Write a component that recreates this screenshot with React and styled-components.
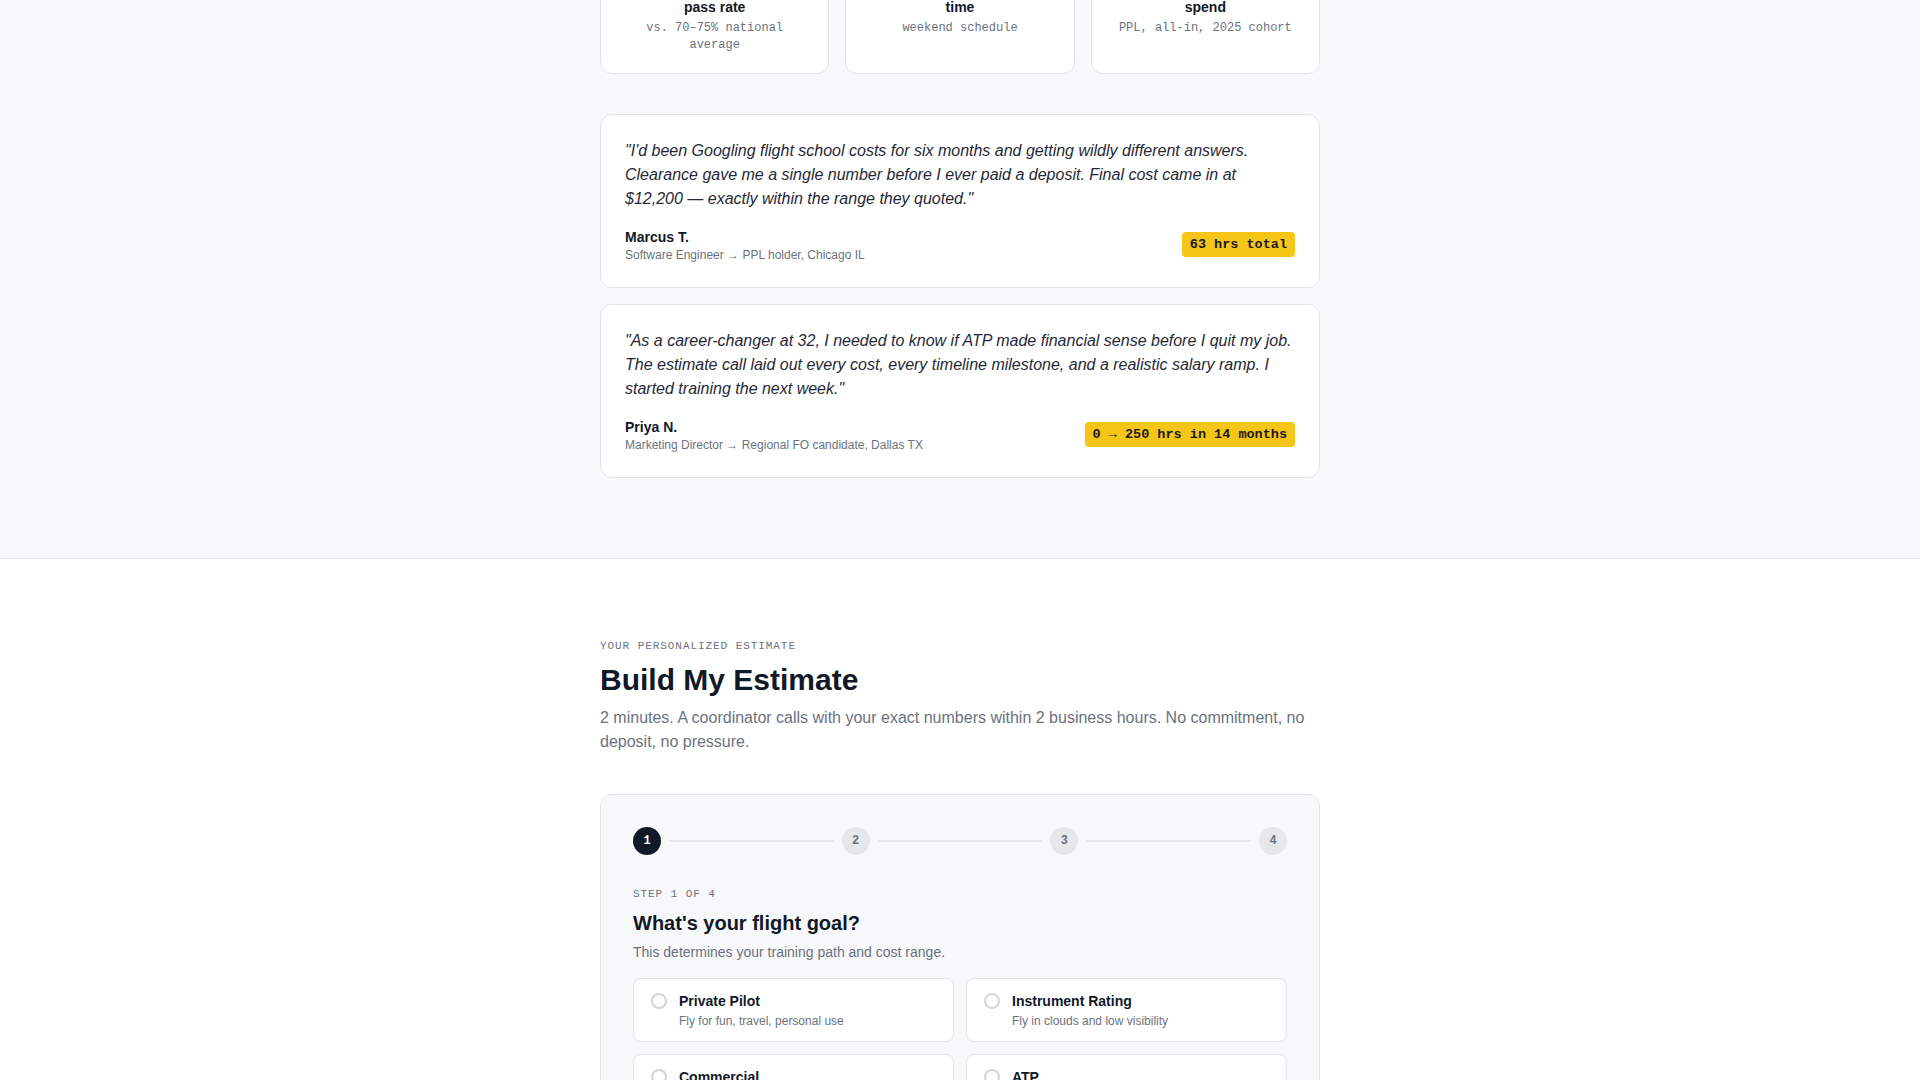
import styled, { createGlobalStyle } from 'styled-components';

const GlobalStyle = createGlobalStyle`
    html, body {
        margin: 0;
        padding: 0;
        background: #fff;
        font-family: "Liberation Sans", Arial, sans-serif;
        color: #111827;
    }
    * {
        box-sizing: border-box;
    }
`;

const mono = `"Liberation Mono", "DejaVu Sans Mono", monospace`;

const Container = styled.div`
    width: 720px;
    margin: 0 auto;
`;

const ProofSection = styled.section`
    background: #f7f8fa;
    padding: 80px 0;
    margin-top: -162px;
`;

const StatGrid = styled.div`
    display: grid;
    grid-template-columns: repeat(3, 1fr);
    gap: 16px;
`;

const StatCard = styled.div`
    background: #fff;
    border: 1px solid #e3e5e9;
    border-radius: 12px;
    padding: 20px 20px 19px;
    text-align: center;
`;

const StatValue = styled.div`
    font-size: 28px;
    font-weight: 700;
    line-height: 34px;
    color: #111827;
`;

const StatLabel = styled.div`
    margin-top: 4px;
    font-size: 14px;
    font-weight: 700;
    line-height: 20px;
    color: #111827;
`;

const StatNote = styled.div`
    margin-top: 3px;
    font-family: ${mono};
    font-size: 12px;
    line-height: 17px;
    color: #6b7280;
`;

const Testimonials = styled.div`
    margin-top: 40px;
    display: flex;
    flex-direction: column;
    gap: 16px;
`;

const Testimonial = styled.div`
    background: #fff;
    border: 1px solid #e3e5e9;
    border-radius: 12px;
    padding: 24px;
`;

const Quote = styled.p`
    margin: 0;
    font-size: 16px;
    font-style: italic;
    line-height: 24px;
    color: #1f2937;
`;

const Attribution = styled.div`
    margin-top: 16px;
    display: flex;
    align-items: center;
    justify-content: space-between;
`;

const Name = styled.div`
    font-size: 14px;
    font-weight: 700;
    line-height: 20px;
    color: #111827;
`;

const Role = styled.div`
    font-size: 12px;
    line-height: 16px;
    color: #6b7280;
`;

const Badge = styled.span`
    background: #f5c518;
    color: #1a1a1a;
    border-radius: 4px;
    padding: 4px 8px;
    margin-bottom: 2px;
    font-family: ${mono};
    font-size: 13.5px;
    font-weight: 700;
    line-height: 17px;
    white-space: nowrap;
`;

const EstimateSection = styled.section`
    border-top: 1px solid #dfe2e6;
    padding: 79px 0 80px;
    background: #fff;
`;

const Eyebrow = styled.div`
    font-family: ${mono};
    font-size: 11px;
    line-height: 16px;
    letter-spacing: 0.085em;
    text-transform: uppercase;
    color: #6b7280;
`;

const Title = styled.h2`
    margin: 8px 0 0;
    font-size: 30px;
    font-weight: 700;
    line-height: 36px;
    color: #111827;
`;

const Lead = styled.p`
    margin: 8px 0 0;
    font-size: 16px;
    line-height: 24px;
    color: #6b7280;
`;

const FormCard = styled.div`
    margin-top: 40px;
    background: #f7f8fa;
    border: 1px solid #e3e5e9;
    border-radius: 12px;
    padding: 32px;
`;

const Stepper = styled.div`
    display: flex;
    align-items: center;
`;

const StepDot = styled.div`
    width: 28px;
    height: 28px;
    flex: none;
    border-radius: 50%;
    display: flex;
    align-items: center;
    justify-content: center;
    font-family: ${mono};
    font-size: 12px;
    font-weight: 700;
    background: ${p => (p.$active ? '#111827' : '#e5e7eb')};
    color: ${p => (p.$active ? '#fff' : '#6b7280')};
`;

const StepLine = styled.div`
    flex: 1;
    height: 2px;
    margin: 0 8px;
    background: #e5e7eb;
`;

const StepLabel = styled(Eyebrow)`
    margin-top: 31px;
`;

const Question = styled.h3`
    margin: 8px 0 0;
    font-size: 20px;
    font-weight: 700;
    line-height: 26px;
    color: #111827;
`;

const Hint = styled.p`
    margin: 6px 0 0;
    font-size: 14px;
    line-height: 20px;
    color: #6b7280;
`;

const Options = styled.div`
    margin-top: 16px;
    display: grid;
    grid-template-columns: 1fr 1fr;
    gap: 12px;
`;

const Option = styled.label`
    display: flex;
    align-items: flex-start;
    gap: 12px;
    background: #fff;
    border: 1px solid #e3e5e9;
    border-radius: 8px;
    padding: 12px 16px 12px 17px;
    cursor: pointer;
`;

const Radio = styled.span`
    width: 16px;
    height: 16px;
    flex: none;
    margin-top: 2px;
    border: 2px solid #d1d5db;
    border-radius: 50%;
    background: #fff;
`;

const OptionTitle = styled.div`
    font-size: 14px;
    font-weight: 700;
    line-height: 20px;
    color: #111827;
`;

const OptionText = styled.div`
    margin-top: 2px;
    font-size: 12px;
    line-height: 16px;
    color: #6b7280;
`;

const stats = [
    { value: '96%', label: ['first-time checkride', 'pass rate'], note: 'vs. 70–75% national average' },
    { value: '7.5 mo', label: ['average PPL completion', 'time'], note: 'weekend schedule' },
    { value: '$11.8k', label: ['median total student', 'spend'], note: 'PPL, all-in, 2025 cohort' },
];

const reviews = [
    {
        quote: '"I\'d been Googling flight school costs for six months and getting wildly different answers. Clearance gave me a single number before I ever paid a deposit. Final cost came in at $12,200 — exactly within the range they quoted."',
        name: 'Marcus T.',
        role: 'Software Engineer → PPL holder, Chicago IL',
        badge: '63 hrs total',
    },
    {
        quote: '"As a career-changer at 32, I needed to know if ATP made financial sense before I quit my job. The estimate call laid out every cost, every timeline milestone, and a realistic salary ramp. I started training the next week."',
        name: 'Priya N.',
        role: 'Marketing Director → Regional FO candidate, Dallas TX',
        badge: '0 → 250 hrs in 14 months',
    },
];

const goals = [
    { title: 'Private Pilot', text: 'Fly for fun, travel, personal use' },
    { title: 'Instrument Rating', text: 'Fly in clouds and low visibility' },
    { title: 'Commercial', text: 'Get paid to fly' },
    { title: 'ATP', text: 'Airline career path' },
];

export default function App() {
    return (
        <>
            <GlobalStyle />
            <ProofSection>
                <Container>
                    <StatGrid>
                        {stats.map(s => (
                            <StatCard key={s.value}>
                                <StatValue>{s.value}</StatValue>
                                <StatLabel>
                                    {s.label[0]}
                                    <br />
                                    {s.label[1]}
                                </StatLabel>
                                <StatNote>{s.note}</StatNote>
                            </StatCard>
                        ))}
                    </StatGrid>

                    <Testimonials>
                        {reviews.map(r => (
                            <Testimonial key={r.name}>
                                <Quote>{r.quote}</Quote>
                                <Attribution>
                                    <div>
                                        <Name>{r.name}</Name>
                                        <Role>{r.role}</Role>
                                    </div>
                                    <Badge>{r.badge}</Badge>
                                </Attribution>
                            </Testimonial>
                        ))}
                    </Testimonials>
                </Container>
            </ProofSection>

            <EstimateSection>
                <Container>
                    <Eyebrow>Your personalized estimate</Eyebrow>
                    <Title>Build My Estimate</Title>
                    <Lead>
                        2 minutes. A coordinator calls with your exact numbers within 2 business hours. No commitment, no deposit, no pressure.
                    </Lead>

                    <FormCard>
                        <Stepper>
                            <StepDot $active>1</StepDot>
                            <StepLine />
                            <StepDot>2</StepDot>
                            <StepLine />
                            <StepDot>3</StepDot>
                            <StepLine />
                            <StepDot>4</StepDot>
                        </Stepper>

                        <StepLabel>Step 1 of 4</StepLabel>
                        <Question>What's your flight goal?</Question>
                        <Hint>This determines your training path and cost range.</Hint>

                        <Options>
                            {goals.map(g => (
                                <Option key={g.title}>
                                    <Radio />
                                    <div>
                                        <OptionTitle>{g.title}</OptionTitle>
                                        <OptionText>{g.text}</OptionText>
                                    </div>
                                </Option>
                            ))}
                        </Options>
                    </FormCard>
                </Container>
            </EstimateSection>
        </>
    );
}
